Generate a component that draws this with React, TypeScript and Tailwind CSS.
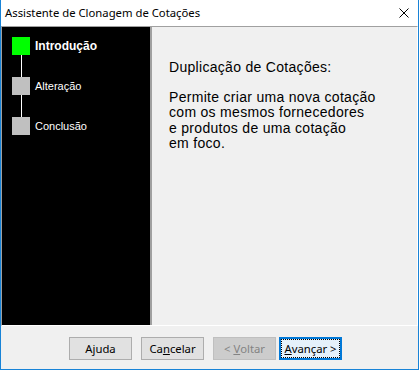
import React from "react";

const steps = [
  { label: "Introdução", active: true },
  { label: "Alteração", active: false },
  { label: "Conclusão", active: false },
];

function Btn({
  children,
  disabled,
  focused,
  className = "",
}: {
  children: React.ReactNode;
  disabled?: boolean;
  focused?: boolean;
  className?: string;
}) {
  if (focused) {
    return (
      <div className={`w-[63px] h-[23px] border-2 border-[#0078d7] bg-[#e5f1fb] ${className}`}>
        <div className="w-full h-full border border-dotted border-black flex items-center justify-center">
          {children}
        </div>
      </div>
    );
  }
  return (
    <div
      className={`w-[63px] h-[23px] border flex items-center justify-center ${
        disabled ? "bg-[#cccccc] border-[#bfbfbf] text-[#838383]" : "bg-[#e1e1e1] border-[#adadad] text-black"
      } ${className}`}
    >
      {children}
    </div>
  );
}

export default function App() {
  return (
    <div className="w-[419px] h-[370px] flex flex-col bg-[#f0f0f0] border-x border-b border-[#1883d7] select-none">
      {/* title bar */}
      <div className="h-[26px] bg-white flex items-center justify-between pl-[4px] pr-[9px] shrink-0">
        <span className="text-[11.3px] text-black font-['Noto_Sans',sans-serif] leading-none">
          Assistente de Clonagem de Cotações
        </span>
        <svg width="10" height="10" viewBox="0 0 10 10">
          <path d="M0.5 0.5 L9.5 9.5 M9.5 0.5 L0.5 9.5" stroke="#000" strokeWidth="1" />
        </svg>
      </div>

      {/* content */}
      <div className="h-[300px] flex border-t border-l border-[#a0a0a0] border-r-white border-b-white border-r border-b shrink-0">
        <div className="w-[150px] bg-black border-r-2 border-[#a0a0a0] pt-[10px] pl-[10px] font-['Liberation_Sans',Arial,sans-serif] text-white">
          {steps.map((s, i) => (
            <div key={s.label}>
              {i > 0 && <div className="w-px h-[22px] bg-white ml-[9px]" />}
              <div className="flex items-center gap-[5px]">
                <div className={`w-[18px] h-[18px] ${s.active ? "bg-[#00ff00]" : "bg-[#c0c0c0]"}`} />
                <span className={s.active ? "text-[12px] font-bold" : "text-[11px]"}>{s.label}</span>
              </div>
            </div>
          ))}
        </div>
        <div className="flex-1 pl-[17px] pt-[33px] font-['Liberation_Sans',Arial,sans-serif] text-[14px] tracking-[0.3px] leading-[15.5px] text-black">
          <p>Duplicação de Cotações:</p>
          <p className="mt-[14px]">
            Permite criar uma nova cotação
            <br />
            com os mesmos fornecedores
            <br />e produtos de uma cotação
            <br />
            em foco.
          </p>
        </div>
      </div>

      {/* footer */}
      <div className="flex-1 flex items-start pt-[11px] pl-[68px] font-['Noto_Sans',sans-serif] text-[11.3px] leading-none">
        <Btn>
          A<span className="underline">j</span>uda
        </Btn>
        <Btn className="ml-[9px]">
          Ca<span className="underline">n</span>celar
        </Btn>
        <Btn disabled className="ml-[9px]">
          &lt;&nbsp;<span className="underline">V</span>oltar
        </Btn>
        <Btn focused className="ml-[3px]">
          <span className="underline">A</span>vançar&nbsp;&gt;
        </Btn>
      </div>
    </div>
  );
}
